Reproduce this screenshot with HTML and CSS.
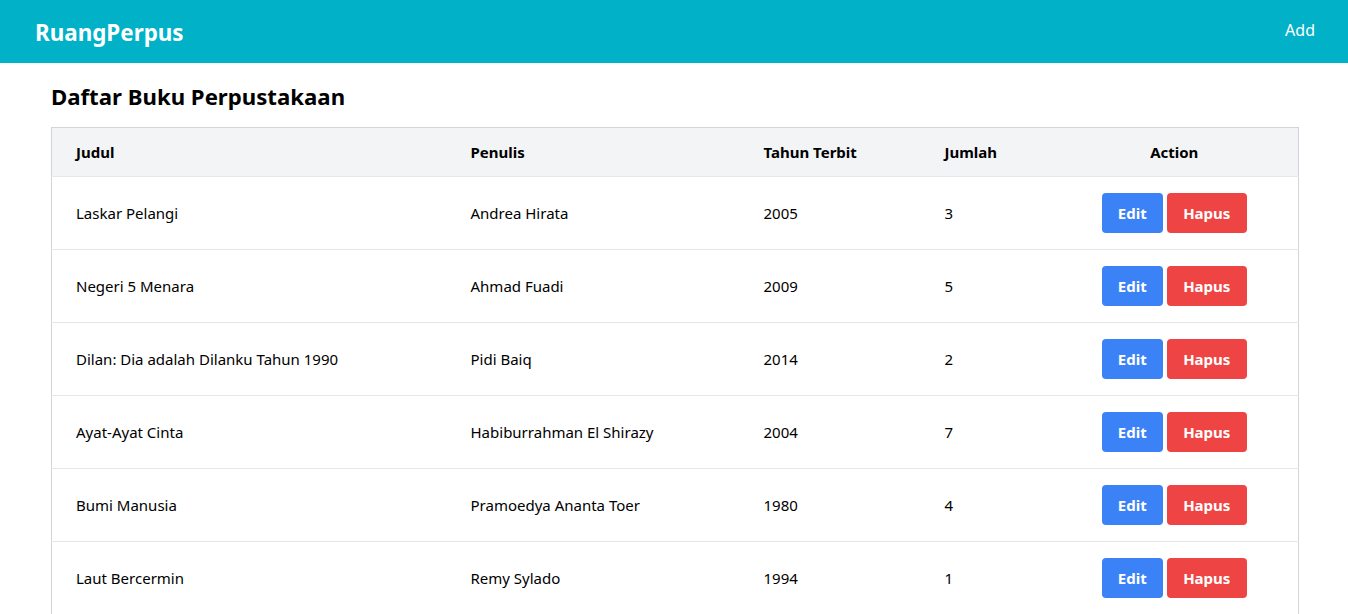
FILE: index.html
```html
<!DOCTYPE html>
<html lang="id">
<head>
<meta charset="utf-8">
<title>RuangPerpus</title>
<link rel="stylesheet" href="styles.css">
</head>
<body>
<nav class="navbar">
  <a class="brand" href="#">RuangPerpus</a>
  <a class="nav-link" href="#">Add</a>
</nav>
<main class="container">
  <h1 class="title">Daftar Buku Perpustakaan</h1>
  <table class="books">
    <colgroup>
      <col class="c1"><col class="c2"><col class="c3"><col class="c4"><col class="c5">
    </colgroup>
    <thead>
      <tr><th>Judul</th><th>Penulis</th><th>Tahun Terbit</th><th>Jumlah</th><th class="center">Action</th></tr>
    </thead>
    <tbody>
      <tr><td>Laskar Pelangi</td><td>Andrea Hirata</td><td>2005</td><td>3</td><td class="center"><div class="actions"><button class="btn edit">Edit</button><button class="btn del">Hapus</button></div></td></tr>
      <tr><td>Negeri 5 Menara</td><td>Ahmad Fuadi</td><td>2009</td><td>5</td><td class="center"><div class="actions"><button class="btn edit">Edit</button><button class="btn del">Hapus</button></div></td></tr>
      <tr><td>Dilan: Dia adalah Dilanku Tahun 1990</td><td>Pidi Baiq</td><td>2014</td><td>2</td><td class="center"><div class="actions"><button class="btn edit">Edit</button><button class="btn del">Hapus</button></div></td></tr>
      <tr><td>Ayat-Ayat Cinta</td><td>Habiburrahman El Shirazy</td><td>2004</td><td>7</td><td class="center"><div class="actions"><button class="btn edit">Edit</button><button class="btn del">Hapus</button></div></td></tr>
      <tr><td>Bumi Manusia</td><td>Pramoedya Ananta Toer</td><td>1980</td><td>4</td><td class="center"><div class="actions"><button class="btn edit">Edit</button><button class="btn del">Hapus</button></div></td></tr>
      <tr><td>Laut Bercermin</td><td>Remy Sylado</td><td>1994</td><td>1</td><td class="center"><div class="actions"><button class="btn edit">Edit</button><button class="btn del">Hapus</button></div></td></tr>
    </tbody>
  </table>
</main>
</body>
</html>
```
FILE: styles.css
```css
* { box-sizing: border-box; }
body {
  margin: 0;
  font-family: "Noto Sans", "Open Sans", sans-serif;
  color: #000;
  background: #fff;
}
.navbar {
  height: 63px;
  background: #00b1c8;
  display: flex;
  align-items: center;
  justify-content: space-between;
  padding: 0 33px 0 35px;
}
.brand {
  color: #fff;
  font-weight: 700;
  font-size: 22.4px;
  text-decoration: none;
  margin-top: 2px;
}
.nav-link {
  color: #fff;
  font-size: 16px;
  text-decoration: none;
  margin-top: -3px;
}
.container {
  padding: 0 49px 0 51px;
}
.title {
  font-size: 22.2px;
  font-weight: 700;
  line-height: 32px;
  margin: 18px 0 14px;
}
.books {
  width: 100%;
  border-collapse: collapse;
  border: 1px solid #d1d5db;
  table-layout: fixed;
  font-size: 15px;
}
.c1 { width: 395px; }
.c2 { width: 293px; }
.c3 { width: 181px; }
.c4 { width: 130px; }
.books th {
  background: #f3f4f6;
  text-align: left;
  font-weight: 700;
  height: 49px;
  padding: 0 24px;
  border-bottom: 1px solid #e5e7eb;
}
.books td {
  height: 73px;
  padding: 0 24px;
  border-bottom: 1px solid #e5e7eb;
}
.books .center { text-align: center; }
.actions {
  display: flex;
  justify-content: center;
  gap: 4px;
}
.btn {
  font-family: inherit;
  font-size: 15px;
  font-weight: 700;
  color: #fff;
  border: 0;
  border-radius: 4px;
  height: 40px;
  padding: 0 16px;
}
.edit { background: #3b82f6; width: 61px; }
.del { background: #ef4444; width: 80px; }
```
